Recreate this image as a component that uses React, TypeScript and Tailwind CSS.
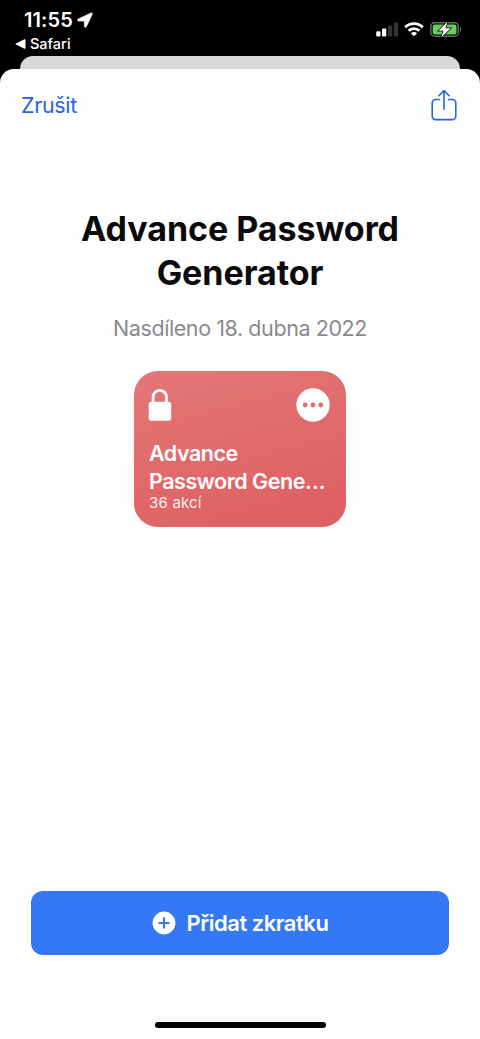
const StatusBar = () => {
  return (
    <div className="h-14 w-full flex justify-between text-white">
      <div className="pl-[15px] pt-[9px]">
        <div className="flex items-center h-[23px] pl-[9px]">
          <span className="text-[20px] leading-[23px] font-semibold tracking-[0.1px]">11:55</span>
          <svg className="ml-1 mb-px w-4 h-4" viewBox="0 0 16 16" fill="currentColor">
            <path d="M14 1 1.200 7.100c-1 .5-.8 1.900.4 1.900h5.300c.3 0 .5.200.5.500v4.700c0 1.300 1.500 1.500 2 .4L15.200 2.200c.4-.9-.3-1.600-1.200-1.200Z" stroke="currentColor" strokeWidth="0.700" />
          </svg>
        </div>
        <div className="flex items-center h-[23px]">
          <svg className="w-[11px] h-[10px]" viewBox="0 0 11 10" fill="currentColor">
            <path d="M1 4.400 9.500.3c.6-.3 1 0 1 .6v8.200c0 .6-.4.9-1 .6L1 5.600c-.6-.3-.6-.9 0-1.200Z" />
          </svg>
          <span className="ml-1 text-[14.5px] leading-[23px] font-medium">Safari</span>
        </div>
      </div>
      <div className="flex items-start pt-[21px] pr-[18px]">
        <svg className="w-[23px] h-4 mt-px" viewBox="0 0 23 16" fill="currentColor">
          <rect x="0.200" y="9.300" width="4.300" height="5.200" rx="1.300" />
          <rect x="6" y="6.500" width="4.300" height="8" rx="1.300" />
          <rect x="12" y="3.500" width="4.300" height="11" rx="1.300" opacity="0.200" />
          <rect x="17.900" y="0.500" width="4.300" height="14" rx="1.300" opacity="0.200" />
        </svg>
        <svg className="ml-[5px] w-5 h-4" viewBox="0 0 20 16" fill="none" stroke="currentColor" strokeWidth="2.700">
          <path d="M1.200 6.200c5-4.900 12.600-4.900 17.600 0" />
          <path d="M4.600 9.700c3.100-2.900 7.700-2.900 10.800 0" />
          <path d="m6.900 12.200 3.100 3.100 3.100-3.100c-1.700-1.700-4.500-1.700-6.200 0Z" fill="currentColor" stroke="none" />
        </svg>
        <svg className="ml-[6px] w-8 h-[17px]" viewBox="0 0 32 17">
          <rect x="0.800" y="1.800" width="27.600" height="13.400" rx="4" fill="none" stroke="#6b6b6b" strokeWidth="1.500" />
          <rect x="2.700" y="3.500" width="23.800" height="10" rx="2.300" fill="#65cf66" />
          <path d="M30 6.300c1.700.6 1.700 3.800 0 4.400Z" fill="#6b6b6b" />
          <path d="M17.700.5 8.500 9.700h5l-2.300 6.700 9.400-9.200h-5.200Z" fill="#fff" stroke="#000" strokeWidth="1.400" paintOrder="stroke" />
        </svg>
      </div>
    </div>
  );
};

const ShareIcon = () => {
  return (
    <svg className="w-[26px] h-8" viewBox="0 0 26 32" fill="none" stroke="#2465e0" strokeWidth="1.600" strokeLinecap="round" strokeLinejoin="round">
      <path d="M8.500 10.500H4.600a3.400 3.400 0 0 0-3.400 3.400v13.300a3.400 3.400 0 0 0 3.400 3.400h16.800a3.400 3.400 0 0 0 3.400-3.400V13.900a3.400 3.400 0 0 0-3.400-3.400h-3.900" />
      <path d="M13 20.200V1.800M7.900 6.700 13 1.500l5.100 5.200" />
    </svg>
  );
};

const ShortcutCard = ({ name, actions }: { name: string, actions: string }) => {
  return (
    <div className="w-[212px] h-[155.5px] rounded-[24px] bg-[linear-gradient(165deg,#e37778,#de5e5f)] text-white">
      <div className="h-[68px] flex justify-between items-start pl-[14px] pr-4 pt-[17px]">
        <svg className="w-6 h-[34px]" viewBox="0 0 24 34" fill="none">
          <path d="M5.100 15V9a6.700 6.700 0 0 1 13.400 0v6" stroke="#fff" strokeWidth="2.800" />
          <rect x="0.700" y="13.700" width="22.500" height="19" rx="3" fill="#fff" />
        </svg>
        <svg className="w-[34px] h-[34px]" viewBox="0 0 34 34">
          <circle cx="17" cy="17" r="16.700" fill="#fff" />
          <circle cx="9.200" cy="17" r="2.400" fill="#e06d6e" />
          <circle cx="17" cy="17" r="2.400" fill="#e06d6e" />
          <circle cx="24.800" cy="17" r="2.400" fill="#e06d6e" />
        </svg>
      </div>
      <div className="pl-[15px]">
        <p className="text-[21.5px] leading-[28px] font-semibold tracking-[-0.47px] whitespace-pre-line">{name}</p>
        <p className="text-[15px] leading-[16px] tracking-[0.2px] opacity-90">{actions}</p>
      </div>
    </div>
  );
};

const App = () => {
  return (
    <div className="w-full h-[1039px] bg-black flex flex-col overflow-hidden font-['Inter',sans-serif]">
      <StatusBar />
      <div className="h-[13px] mx-5 rounded-t-[13px] bg-[#d9d9d9]" />
      <div className="flex-1 bg-[#fefefe] rounded-t-[14px] flex flex-col items-center">
        <div className="w-full h-[72px] flex justify-between items-center pl-[21px] pr-[23px]">
          <button className="text-[21.5px] leading-[26px] tracking-[-0.35px] text-[#2465e0]">Zrušit</button>
          <ShareIcon />
        </div>

        <h1 className="mt-[66px] text-[34px] leading-[43.5px] font-bold text-center text-[#0b0b0c] tracking-[-0.05px]">
          Advance Password
          <br />
          Generator
        </h1>
        <p className="mt-[19.5px] mb-[29.5px] text-[21.5px] leading-[28px] tracking-[-0.42px] text-[#8a8a8e]">Nasdíleno 18. dubna 2022</p>

        <ShortcutCard name={"Advance\nPassword Gene…"} actions="36 akcí" />

        <button className="mt-auto w-[418px] h-16 rounded-[12px] bg-[#3478f6] text-white flex items-center justify-center">
          <svg className="w-6 h-6" viewBox="0 0 24 24">
            <circle cx="12" cy="12" r="11.400" fill="#fff" />
            <path d="M12 7.300v9.400M7.300 12h9.400" stroke="#3478f6" strokeWidth="2.100" strokeLinecap="round" />
          </svg>
          <span className="ml-[11px] text-[22px] leading-[28px] font-semibold tracking-[-0.48px]">Přidat zkratku</span>
        </button>
        <div className="mt-[67.5px] mb-[11px] w-[171px] h-[6px] rounded-full bg-black" />
      </div>
    </div>
  );
};

export default App;
